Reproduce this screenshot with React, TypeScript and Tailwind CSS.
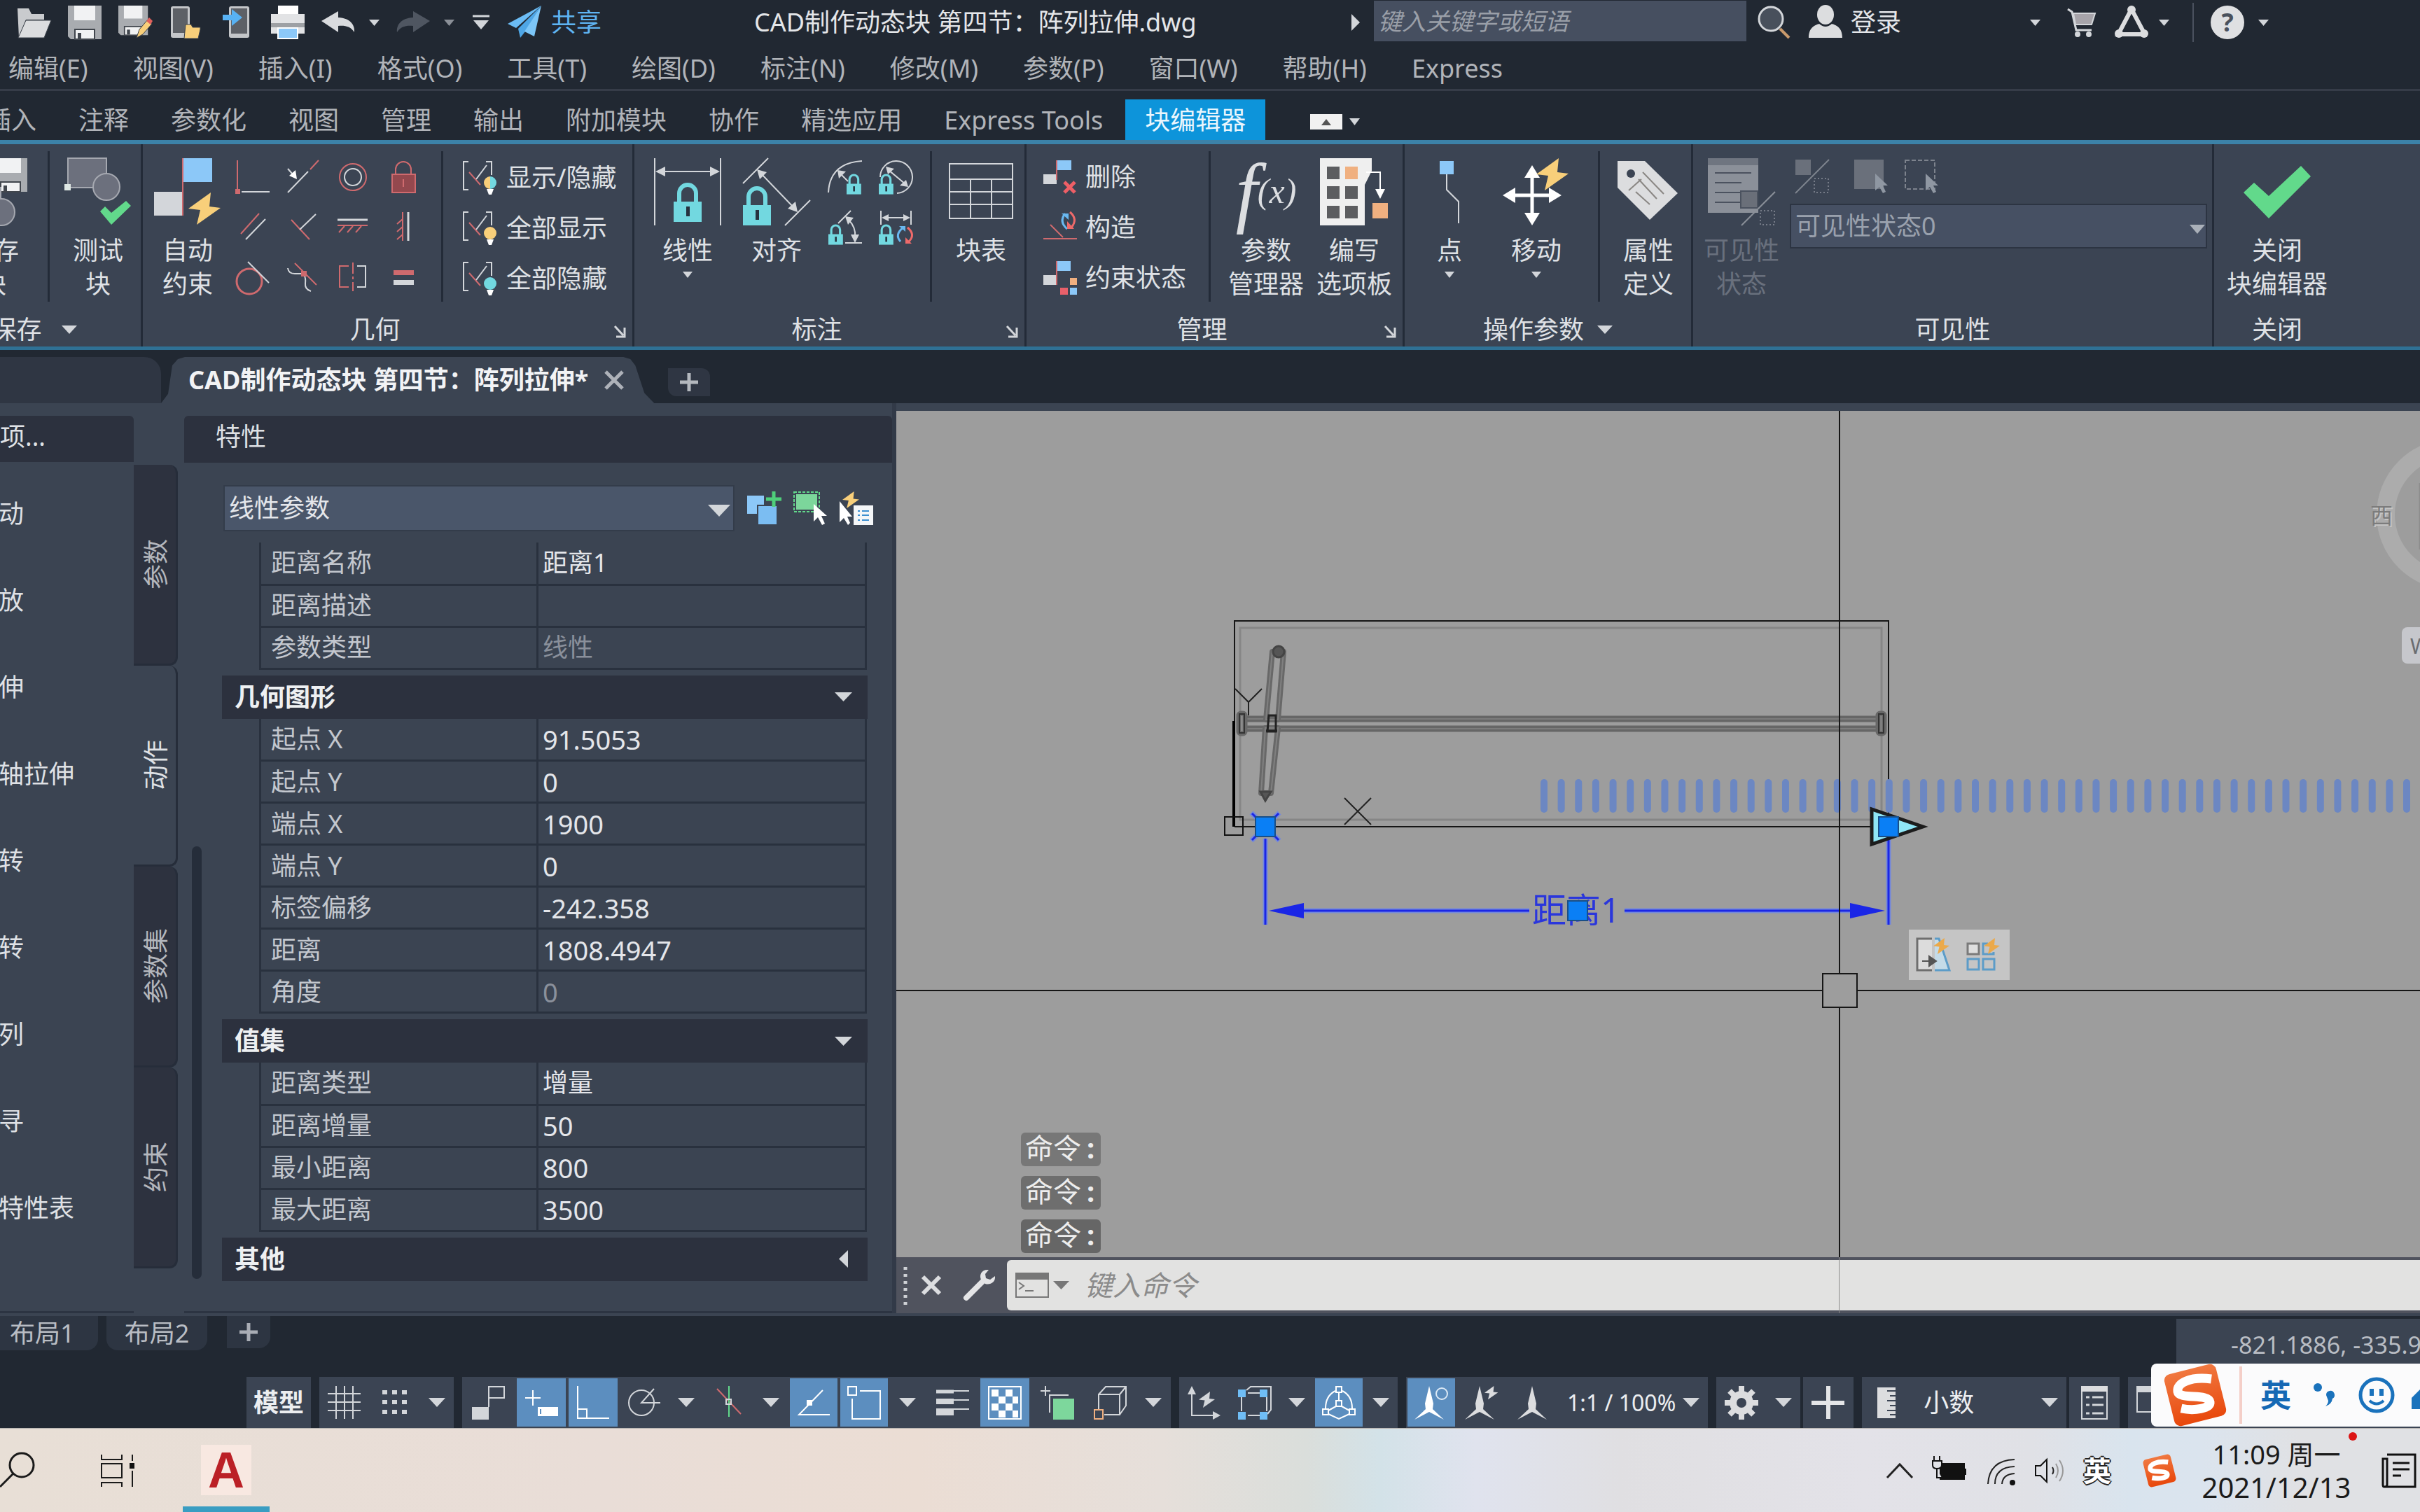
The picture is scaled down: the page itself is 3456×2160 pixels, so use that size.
import type { ReactNode } from 'react'

const GREY = '#d3d6da'
const BLUE = '#8cc8f8'
const RED = '#cf6a6e'
const YELLOW = '#f8cf7a'
const CYAN = '#72d8e0'
const GREEN = '#62d98b'
const ORANGE = '#f0b080'

interface IconProps {
  w?: number
  h?: number
  children: ReactNode
}

function Icon({ w = 48, h = 48, children }: IconProps) {
  return (
    <svg width={w} height={h} viewBox={`0 0 ${w} ${h}`} fill="none" stroke={GREY} strokeWidth={2} className="block shrink-0 overflow-visible" aria-hidden="true">
      {children}
    </svg>
  )
}

function Caret({ w = 24, h = 13, color = GREY }: { w?: number; h?: number; color?: string }) {
  return (
    <svg width={w} height={h} viewBox="0 0 24 13" preserveAspectRatio="none" className="block shrink-0" aria-hidden="true">
      <path d="M0 0H24L12 13Z" fill={color} />
    </svg>
  )
}

function Lock({ x, y, s = 1, keyhole = '#26323f' }: { x: number; y: number; s?: number; keyhole?: string }) {
  return (
    <g transform={`translate(${x} ${y}) scale(${s})`}>
      <path d="M8 28V14a12 12 0 0 1 24 0V28" stroke={CYAN} strokeWidth={6} />
      <rect y={26} width={40} height={29} fill={CYAN} stroke="none" />
      <rect x={18} y={33} width={5} height={14} fill={keyhole} stroke="none" />
    </g>
  )
}

function Bolt({ x, y, s = 1, color = YELLOW }: { x: number; y: number; s?: number; color?: string }) {
  return <path transform={`translate(${x} ${y}) scale(${s})`} d="M32 0L0 23L17 25L12 46L46 22L30 20Z" fill={color} stroke="none" />
}

function Floppy() {
  return (
    <g stroke="none">
      <path d="M0 0H48V48H4L0 44Z" fill="#a9acb0" />
      <rect x={9} y={0} width={30} height={21} fill="#f1f2f3" />
      <rect x={10} y={34} width={28} height={14} fill="#f1f2f3" stroke="#41464d" strokeWidth={2} />
      <rect x={14} y={39} width={5} height={8} fill="#41464d" />
    </g>
  )
}

/* ---------- Title bar ---------- */

function TitleBar() {
  return (
    <header className="flex h-16 shrink-0 items-center pr-[216px] text-[36px] text-[#e4e6e9]">
      <div className="flex items-center pl-[2px]">
        <button aria-label="打开" className="ml-[23px]">
          <Icon>
            <path d="M0 4H16L20 12H38V20H12L2 46Z" fill="#c9cbce" stroke="none" />
            <path d="M12 21H48L38 46H1Z" fill="#dcdddf" stroke="#3a4049" strokeWidth={1} />
          </Icon>
        </button>
        <button aria-label="保存" className="ml-6">
          <Icon><Floppy /></Icon>
        </button>
        <button aria-label="另存为" className="ml-6">
          <Icon>
            <g transform="scale(.88 .88)"><Floppy /></g>
            <path d="M26 46L30 34L42 20L48 26L35 41Z" fill={YELLOW} stroke="#3a4049" strokeWidth={1} />
            <path d="M40 22L44 17L49 22L46 27Z" fill="#e0605c" stroke="none" />
          </Icon>
        </button>
        <button aria-label="从移动设备打开" className="ml-[26px]">
          <Icon>
            <rect x={1} y={1} width={27} height={45} rx={3} fill="#c4c6c9" stroke="none" />
            <rect x={4} y={4} width={21} height={35} fill="#5d6066" stroke="none" />
            <path d="M22 27H30L32 31H43V34L40 47H20Z" fill={YELLOW} stroke="#3a4049" strokeWidth={1} />
          </Icon>
        </button>
        <button aria-label="保存到移动设备" className="ml-[26px]">
          <Icon>
            <rect x={10} y={1} width={29} height={45} rx={3} fill="#c4c6c9" stroke="none" />
            <rect x={13} y={4} width={23} height={36} fill="#5d6066" stroke="none" />
            <path d="M1 13H14V5L29 17L14 29V21H1Z" fill="#58b2f4" stroke="none" />
          </Icon>
        </button>
        <button aria-label="打印" className="ml-[22px]">
          <Icon>
            <rect x={10} y={0} width={29} height={16} fill="#fff" stroke="none" />
            <path d="M0 12H48V40H0Z" fill="#e2e3e5" stroke="none" />
            <path d="M0 25H48V31H0Z" fill="#9da0a4" stroke="none" />
            <rect x={10} y={32} width={28} height={15} fill={BLUE} stroke="#fff" />
          </Icon>
        </button>
        <button aria-label="放弃" className="ml-6">
          <Icon><path d="M0 22L24 8V17C42 18 48 28 47 38C42 30 34 28 24 29V38Z" fill="#d9dbde" stroke="none" /></Icon>
        </button>
        <button aria-label="放弃列表" className="ml-5"><Caret w={15} h={9} /></button>
        <button aria-label="重做" className="ml-6">
          <Icon><path d="M48 22L24 8V17C6 18 0 28 1 38C6 30 14 28 24 29V38Z" fill="#4f5661" stroke="none" /></Icon>
        </button>
        <button aria-label="重做列表" className="ml-5"><Caret w={15} h={9} color="#8b9098" /></button>
        <button aria-label="自定义" className="ml-[26px]">
          <Icon w={24} h={24}>
            <path d="M0 3H24" strokeWidth={3} />
            <path d="M1 9H23L12 22Z" fill={GREY} stroke="none" />
          </Icon>
        </button>
        <button className="ml-[26px] flex items-center gap-[14px] text-[#5fb4f2]">
          <Icon>
            <path d="M48 0L0 26L12 32Z" fill="#6bbcf5" stroke="none" />
            <path d="M48 0L15 33L18 46L25 37Z" fill="#4ea6e6" stroke="none" />
            <path d="M48 0L24 37L38 44Z" fill="#7cc6f8" stroke="none" />
          </Icon>
          共享
        </button>
      </div>
      <h1 className="ml-[218px] whitespace-nowrap">CAD制作动态块 第四节：阵列拉伸.dwg</h1>
      <div className="flex-1" />
      <svg width={12} height={24} className="mr-5" aria-hidden="true"><path d="M0 0L12 12L0 24Z" fill={GREY} /></svg>
      <input aria-label="搜索" placeholder="键入关键字或短语" className="mb-1 h-[58px] w-[532px] bg-[#464f60] px-[6px] text-[34px] text-white italic placeholder:text-[#9a9fa8]" />
      <button aria-label="查找" className="ml-[17px]">
        <Icon>
          <circle cx={18} cy={19} r={17} fill="#48505c" strokeWidth={3} />
          <path d="M31 33L44 46" stroke="#c99a6c" strokeWidth={4} />
        </Icon>
      </button>
      <button className="ml-6 flex items-center gap-3">
        <Icon>
          <ellipse cx={24} cy={13} rx={12} ry={14} fill="#dcdddf" stroke="none" />
          <path d="M0 46C0 32 8 28 15 26Q24 34 33 26C40 28 48 32 48 46Z" fill="#dcdddf" stroke="none" />
        </Icon>
        登录
      </button>
      <button aria-label="账户列表" className="ml-[184px]"><Caret w={15} h={9} /></button>
      <button aria-label="应用商店" className="ml-[39px]">
        <Icon w={40} h={42}>
          <path d="M0 2L6 6L12 32H34" strokeWidth={3} />
          <path d="M8 8H39L34 24H11Z" fill="#a7a4aa" />
          <circle cx={14} cy={38} r={3} fill={GREY} />
          <circle cx={30} cy={38} r={3} fill={GREY} />
        </Icon>
      </button>
      <button aria-label="保持连接" className="ml-[27px]">
        <Icon>
          <path d="M24 5L43 41M24 5L5 41H43" stroke="#dcdddf" strokeWidth={6} />
          <g fill="#dcdddf" stroke="none"><circle cx={24} cy={6} r={6} /><circle cx={6} cy={40} r={6} /><circle cx={42} cy={40} r={6} /></g>
        </Icon>
      </button>
      <button aria-label="连接列表" className="ml-[15px]"><Caret w={15} h={9} /></button>
      <div className="ml-[33px] h-14 w-[2px] bg-[#4a515f]" />
      <button aria-label="帮助" className="ml-6 flex size-12 items-center justify-center rounded-full bg-[#dfe0e2] text-[36px] leading-none font-bold text-[#4a515c]">?</button>
      <button aria-label="帮助列表" className="ml-5"><Caret w={15} h={9} /></button>
    </header>
  )
}

const menus = ['编辑(E)', '视图(V)', '插入(I)', '格式(O)', '工具(T)', '绘图(D)', '标注(N)', '修改(M)', '参数(P)', '窗口(W)', '帮助(H)', 'Express']

const ribbonTabs = ['插入', '注释', '参数化', '视图', '管理', '输出', '附加模块', '协作', '精选应用', 'Express Tools', '块编辑器']

function MenuBar() {
  return (
    <nav className="flex h-[66px] shrink-0 items-center gap-16 border-b-[3px] border-[#363c48] pt-1 pl-3 text-[36px] text-[#b1b4b9]">
      {menus.map((m) => (
        <button key={m} className="whitespace-nowrap">{m}</button>
      ))}
    </nav>
  )
}

function RibbonTabs() {
  return (
    <div role="tablist" className="-ml-12 flex h-[70px] shrink-0 items-end gap-1 text-[36px] text-[#b1b4b9]">
      {ribbonTabs.map((t) => (
        <button
          key={t}
          role="tab"
          aria-selected={t === '块编辑器'}
          className={`h-[58px] px-7 leading-[60px] whitespace-nowrap ${t === '块编辑器' ? 'bg-[#0d94da] text-[#eaf6fd]' : ''}`}
        >
          {t}
        </button>
      ))}
      <button aria-label="最小化功能区" className="ml-[60px] flex h-[48px] items-center gap-[10px] self-end pb-1">
        <span className="flex h-[22px] w-[46px] items-center justify-center bg-[#f1f1f1]">
          <span className="rotate-180"><Caret w={14} h={9} color="#555" /></span>
        </span>
        <Caret w={15} h={10} />
      </button>
    </div>
  )
}

/* ---------- Ribbon ---------- */

interface PanelProps {
  title: string
  className?: string
  menu?: boolean
  launcher?: boolean
  children: ReactNode
}

function Panel({ title, className = '', menu, launcher, children }: PanelProps) {
  return (
    <section className={`flex shrink-0 flex-col border-r-[3px] border-[#232b38] ${className}`}>
      <div className="flex h-[225px]">{children}</div>
      <div className={`relative flex h-16 items-center justify-center gap-[19px] pt-4 ${launcher ? 'pr-9' : ''}`}>
        <span>{title}</span>
        {menu && <Caret w={22} h={12} />}
        {launcher && (
          <button aria-label={`${title}设置`} className="absolute right-[9px] bottom-3">
            <Icon w={18} h={18}>
              <path d="M2 1L14 14M16 3V16H4" strokeWidth={3} />
            </Icon>
          </button>
        )}
      </div>
    </section>
  )
}

interface BigButtonProps {
  icon: ReactNode
  lines: string[]
  className: string
  menu?: boolean
}

function BigButton({ icon, lines, className, menu }: BigButtonProps) {
  return (
    <button className={`flex shrink-0 flex-col items-center pt-[18px] ${className}`}>
      <span className="flex h-[98px] items-center justify-center">{icon}</span>
      <span className="mt-3 flex flex-col items-center leading-[48px]">
        {lines.map((l) => (
          <span key={l} className="block whitespace-nowrap">{l}</span>
        ))}
        {menu && <span className="mt-[6px]"><Caret w={14} h={9} /></span>}
      </span>
    </button>
  )
}

function Divider() {
  return <div className="mt-[10px] h-[215px] w-[3px] shrink-0 bg-[#232b38]" />
}

const geometryIcons: { name: string; art: ReactNode }[] = [
  { name: '重合', art: <><path d="M3 0V42" stroke={RED} /><rect x={0} y={41} width={7} height={7} fill={RED} stroke="none" /><path d="M9 45H49" /></> },
  { name: '共线', art: <><path d="M3 46L32 16" /><path d="M35 13L47 0" stroke={RED} /><path d="M3 12L10 20" /><path d="M16 27L5 22L14 14Z" fill="#fff" stroke="none" /></> },
  { name: '同心', art: <><circle cx={24} cy={24} r={19} stroke={RED} /><circle cx={24} cy={24} r={12} /></> },
  { name: '固定', art: <><path d="M13 20V13a11 11 0 0 1 22 0v7" stroke={RED} /><rect x={8} y={20} width={33} height={26} fill="#94484e" stroke={RED} /><path d="M24 27V38" stroke={RED} /></> },
  { name: '平行', art: <><path d="M8 33L34 4" stroke={RED} /><path d="M15 41L43 12" /></> },
  { name: '垂直', art: <><path d="M8 13L34 41" stroke={RED} /><path d="M20 27L43 5" /></> },
  { name: '水平', art: <><path d="M2 13H45" strokeWidth={3} /><path d="M2 21H45M12 22L4 31M24 22L16 31M36 22L28 31" stroke={RED} /></> },
  { name: '竖直', art: <><path d="M31 2V43" strokeWidth={3} /><path d="M23 2V43M23 12L15 19M23 23L15 30M23 34L15 41" stroke={RED} /></> },
  { name: '相切', art: <><circle cx={20} cy={29} r={18} stroke={RED} strokeWidth={3} /><path d="M18 1L48 31" /></> },
  { name: '平滑', art: <><path d="M3 10Q4 18 13 18H24M26 20Q29 24 28 32T36 43" /><path d="M13 3L44 34" stroke={RED} /><rect x={22} y={14} width={8} height={8} fill={RED} stroke="none" /></> },
  { name: '对称', art: <><path d="M18 7H5V37H18" stroke={RED} /><path d="M24 2V18M24 22V26M24 30V43" stroke={RED} /><path d="M30 7H42V37H30" /></> },
  { name: '相等', art: <><rect x={10} y={13} width={29} height={7} fill={RED} stroke="none" /><rect x={10} y={27} width={29} height={7} fill={GREY} stroke="none" /></> },
]

const visibilityRows = [
  { label: '显示/隐藏', left: YELLOW, right: CYAN },
  { label: '全部显示', left: YELLOW, right: YELLOW },
  { label: '全部隐藏', left: CYAN, right: CYAN },
]

function GeometryPanel() {
  return (
    <Panel title="几何" launcher className="w-[702px]">
      <BigButton
        className="ml-2 w-[112px]"
        lines={['自动', '约束']}
        icon={
          <Icon w={96} h={98}>
            <rect x={42} y={2} width={41} height={34} fill={BLUE} stroke="none" />
            <rect x={0} y={50} width={41} height={34} fill={GREY} stroke="none" />
            <path d="M41 2V84" stroke={RED} />
            <Bolt x={49} y={51} />
          </Icon>
        }
      />
      <div className="mt-[11px] grid h-[216px] w-[288px] shrink-0 grid-cols-4 grid-rows-3 place-items-center">
        {geometryIcons.map((g) => (
          <button key={g.name} aria-label={g.name}><Icon>{g.art}</Icon></button>
        ))}
      </div>
      <div className="w-[18px]" />
      <Divider />
      <div className="mt-3 grid h-[216px] grid-rows-3 items-center pl-[26px]">
        {visibilityRows.map((r) => (
          <button key={r.label} className="flex items-center gap-3 whitespace-nowrap">
            <Icon w={52}>
              <path d="M10 1H3V41H10M35 1H43V20" />
              <path d="M11 16L27 34" stroke={RED} />
              <path d="M21 26L36 6" />
              <path d="M41 22A9 9 0 0 0 41 40Z" fill={r.left} stroke="none" />
              <path d="M41 22A9 9 0 0 1 41 40Z" fill={r.right} stroke="none" />
              <path d="M36 40H46L43 48H39Z" fill="#fff" stroke="none" />
            </Icon>
            {r.label}
          </button>
        ))}
      </div>
    </Panel>
  )
}

function DimensionPanel() {
  return (
    <Panel title="标注" launcher className="w-[560px]">
      <BigButton
        className="ml-[15px] w-[122px]"
        lines={['线性']}
        menu
        icon={
          <Icon w={96} h={98}>
            <path d="M1 2V98M95 2V98M4 21H92" />
            <path d="M2 21L16 14V28ZM94 21L80 14V28Z" fill={GREY} stroke="none" />
            <Lock x={28} y={38} />
          </Icon>
        }
      />
      <BigButton
        className="w-[128px] pl-1"
        lines={['对齐']}
        icon={
          <Icon w={96} h={98}>
            <path d="M36 2L0 38M96 62L60 98M24 22L74 74" />
            <path d="M20 18L34 22L24 32ZM78 79L64 74L75 64Z" fill={GREY} stroke="none" />
            <Lock x={0} y={43} />
          </Icon>
        }
      />
      <div className="mt-[11px] grid h-36 w-36 shrink-0 grid-cols-2 grid-rows-2 place-items-center">
        <button aria-label="半径">
          <Icon>
            <path d="M0 46Q2 4 48 1M16 18L28 30" />
            <path d="M13 14L25 16L15 26Z" fill={GREY} stroke="none" />
            <Lock x={26} y={20} s={0.52} />
          </Icon>
        </button>
        <button aria-label="直径">
          <Icon>
            <path d="M2 24A23 23 0 1 1 26 47M14 14L38 34" />
            <path d="M10 9L22 12L13 20ZM42 38L30 36L39 28Z" fill={GREY} stroke="none" />
            <Lock x={0} y={20} s={0.52} />
          </Icon>
        </button>
        <button aria-label="角度">
          <Icon>
            <path d="M14 18L32 0M24 46H48M28 12Q40 24 38 38" />
            <path d="M24 8L36 10L28 20ZM38 46L32 34H44Z" fill={GREY} stroke="none" />
            <Lock x={0} y={20} s={0.52} />
          </Icon>
        </button>
        <button aria-label="转换">
          <Icon>
            <path d="M3 0V20M46 0V20M6 10H43" />
            <path d="M4 10L14 5V15ZM45 10L35 5V15Z" fill={GREY} stroke="none" />
            <Lock x={0} y={20} s={0.52} />
            <path d="M35 24Q22 34 31 44" stroke="#69b8f0" strokeWidth={3} />
            <path d="M29 22H38V30Z" fill="#69b8f0" stroke="none" />
            <path d="M41 24Q53 34 43 44" stroke="#ee6a6a" strokeWidth={3} />
            <path d="M38 38V47H47Z" fill="#ee6a6a" stroke="none" />
          </Icon>
        </button>
      </div>
      <div className="w-4" />
      <Divider />
      <BigButton
        className="w-[132px] pl-2"
        lines={['块表']}
        icon={
          <Icon w={92} h={80}>
            <path d="M1 1H91V79H1ZM1 23H91M1 41H91M1 59H91M31 23V79M61 23V79" />
          </Icon>
        }
      />
    </Panel>
  )
}

function ManagePanel() {
  return (
    <Panel title="管理" launcher className="w-[540px]">
      <div className="mt-[11px] grid h-[216px] w-[260px] shrink-0 grid-rows-3 items-center pl-6">
        <button className="flex items-center gap-3 whitespace-nowrap">
          <Icon>
            <rect x={20} y={0} width={20} height={14} fill={BLUE} stroke="none" />
            <rect x={0} y={20} width={19} height={14} fill={GREY} stroke="none" />
            <path d="M19 0V28" stroke={RED} />
            <path d="M30 31L45 46M45 31L30 46" stroke="#ee5f66" strokeWidth={5} />
          </Icon>
          删除
        </button>
        <button className="flex items-center gap-3 whitespace-nowrap">
          <Icon>
            <path d="M0 40H48M10 20L28 38" stroke={RED} />
            <path d="M34 26Q22 16 31 4" stroke="#69b8f0" strokeWidth={3} />
            <path d="M26 4H36V13Z" fill="#69b8f0" stroke="none" />
            <path d="M38 2Q50 12 40 24" stroke="#ee6a6a" strokeWidth={3} />
            <path d="M34 15V26H44Z" fill="#ee6a6a" stroke="none" />
          </Icon>
          构造
        </button>
        <button className="flex items-center gap-3 whitespace-nowrap">
          <Icon>
            <rect x={20} y={0} width={19} height={14} fill={BLUE} stroke="none" />
            <rect x={0} y={20} width={19} height={14} fill={GREY} stroke="none" />
            <path d="M19 0V34" stroke={RED} />
            <rect x={38} y={24} width={10} height={10} fill={ORANGE} stroke="none" />
            <rect x={24} y={38} width={11} height={10} fill="#e8606a" stroke="none" />
            <rect x={38} y={38} width={10} height={10} fill={BLUE} stroke="none" />
          </Icon>
          约束状态
        </button>
      </div>
      <Divider />
      <BigButton
        className="ml-[16px] w-[126px]"
        lines={['参数', '管理器']}
        icon={
          <span className="flex items-center font-['Liberation_Serif',serif] text-[#dcdee1] italic">
            <span className="text-[112px] leading-[98px]">f</span>
            <span className="text-[50px] leading-[98px]">(x)</span>
          </span>
        }
      />
      <BigButton
        className="w-[126px]"
        lines={['编写', '选项板']}
        icon={
          <Icon w={98} h={98}>
            <path d="M0 2H74V20L64 40V98H0Z" fill="#efefef" stroke="none" />
            <g fill="#5c5d60" stroke="none">
              <rect x={10} y={14} width={18} height={18} />
              <rect x={10} y={42} width={18} height={18} />
              <rect x={10} y={70} width={18} height={18} />
              <rect x={36} y={42} width={18} height={18} />
              <rect x={36} y={70} width={18} height={18} />
            </g>
            <rect x={36} y={14} width={18} height={18} fill={ORANGE} stroke="none" />
            <path d="M66 22H86V50" stroke="#fff" />
            <path d="M86 60L79 46H93Z" fill="#fff" stroke="none" />
            <rect x={75} y={66} width={22} height={22} fill={ORANGE} stroke="none" />
          </Icon>
        }
      />
    </Panel>
  )
}

function ActionPanel() {
  return (
    <Panel title="操作参数" menu className="w-[412px]">
      <BigButton
        className="w-[128px]"
        lines={['点']}
        menu
        icon={
          <Icon w={32} h={98}>
            <rect x={2} y={6} width={20} height={19} fill={BLUE} stroke="none" />
            <path d="M12 25V47L29 64V95" />
          </Icon>
        }
      />
      <BigButton
        className="w-[120px]"
        lines={['移动']}
        menu
        icon={
          <Icon w={96} h={98}>
            <path d="M42 24V86M12 55H74" stroke="#fff" strokeWidth={5} />
            <path d="M42 12L31 30H53ZM42 98L31 80H53ZM0 55L18 44V66ZM84 55L66 44V66Z" fill="#fff" stroke="none" />
            <Bolt x={48} y={2} />
          </Icon>
        }
      />
      <div className="w-7" />
      <Divider />
      <BigButton
        className="w-[130px] pl-2"
        lines={['属性', '定义']}
        icon={
          <Icon w={88} h={98}>
            <path d="M0 6H39L86 52L46 90L0 44Z" fill="#dcdddf" stroke="none" />
            <circle cx={19} cy={24} r={6} fill="#3b4453" stroke="none" />
            <path d="M36 22L66 53M30 32L56 60M26 50L46 68M16 48L34 32" stroke="#8a8784" />
          </Icon>
        }
      />
    </Panel>
  )
}

function VisibilityPanel() {
  return (
    <Panel title="可见性" className="w-[744px]">
      <div className="text-[#69707d]">
        <BigButton
          className="w-[138px]"
          lines={['可见性', '状态']}
          icon={
            <Icon w={96} h={98}>
              <rect x={0} y={2} width={72} height={78} fill="#8b9099" stroke="none" />
              <rect x={0} y={2} width={72} height={10} fill="#6f7580" stroke="none" />
              <path d="M10 23H62M10 37H48M10 51H52M10 65H46" stroke="#4b525f" />
              <rect x={47} y={49} width={24} height={24} fill="#6a6f79" stroke="#4b525f" />
              <path d="M96 50L48 98" stroke="#8b9099" />
              <rect x={75} y={77} width={20} height={20} stroke="#767c88" strokeDasharray="2 3" />
            </Icon>
          }
        />
      </div>
      <div className="flex flex-1 flex-col pr-[7px]">
        <div className="flex h-[85px] items-center gap-9 pt-[6px] pl-2">
          <button aria-label="可见性模式">
            <Icon>
              <rect x={0} y={0} width={22} height={22} fill="#6a707b" stroke="none" />
              <path d="M48 0L0 48" stroke="#7d838d" />
              <rect x={27} y={27} width={20} height={20} stroke="#767c88" strokeDasharray="2 3" />
            </Icon>
          </button>
          <button aria-label="使可见">
            <Icon>
              <rect x={0} y={0} width={42} height={42} fill="#6a707b" stroke="none" />
              <path d="M30 20V44L36 39L41 48L45 46L41 37H48Z" fill="#8f97a2" stroke="none" />
            </Icon>
          </button>
          <button aria-label="使不可见" className="-ml-3">
            <Icon>
              <rect x={1} y={1} width={42} height={41} stroke="#7d838d" strokeDasharray="6 3" />
              <path d="M30 20V44L36 39L41 48L45 46L41 37H48Z" fill="#8f97a2" stroke="none" />
            </Icon>
          </button>
        </div>
        <div className="relative">
          <select aria-label="可见性状态" className="h-[64px] w-full appearance-none border-2 border-[#2c3442] bg-[#465063] px-[6px] text-[#9aa1ad]">
            <option>可见性状态0</option>
          </select>
          <span className="pointer-events-none absolute top-[30px] right-[3px]"><Caret w={22} h={13} color="#aab0b9" /></span>
        </div>
      </div>
    </Panel>
  )
}

function Ribbon() {
  return (
    <div className="flex shrink-0 overflow-hidden border-t-[6px] border-b-[5px] border-t-[#3c82a8] border-b-[#2f7195] bg-[#3b4453] text-[36px] text-[#dfe1e5]">
      <section className="-ml-[76px] flex w-[280px] shrink-0 flex-col border-r-[3px] border-[#232b38]">
        <div className="flex h-[225px]">
          <BigButton
            className="mr-[10px] w-[134px]"
            lines={['保存', '块']}
            icon={
              <Icon w={96} h={98}>
                <g transform="translate(48 2)"><Floppy /></g>
                <rect x={8} y={44} width={50} height={38} fill="#6c707d" stroke="#a5a8b0" />
                <circle cx={59} cy={79} r={19} fill="#6c707d" stroke="#a5a8b0" />
              </Icon>
            }
          />
          <Divider />
          <BigButton
            className="w-[134px] pl-1"
            lines={['测试', '块']}
            icon={
              <Icon w={96} h={98}>
                <rect x={5} y={2} width={55} height={42} fill="#6c707d" stroke="#a5a8b0" />
                <circle cx={60} cy={43} r={19} fill="#6c707d" stroke="#a5a8b0" />
                <rect x={0} y={39} width={9} height={9} fill="#dfe8e4" stroke="none" />
                <path d="M51 78L58 71L67 80L88 63L95 70L67 97Z" fill={GREEN} stroke="none" />
              </Icon>
            }
          />
        </div>
        <div className="flex h-16 items-center justify-center gap-7 pt-4 pr-[28px]">
          保存
          <Caret w={22} h={12} />
        </div>
      </section>
      <GeometryPanel />
      <DimensionPanel />
      <ManagePanel />
      <ActionPanel />
      <VisibilityPanel />
      <section className="flex w-[180px] shrink-0 flex-col">
        <BigButton
          className="h-[225px] w-[180px]"
          lines={['关闭', '块编辑器']}
          icon={
            <Icon w={96} h={98}>
              <path d="M0 51L15 37L36 56L82 13L96 28L36 88Z" fill={GREEN} stroke="none" />
            </Icon>
          }
        />
        <div className="flex h-16 items-center justify-center pt-4">关闭</div>
      </section>
    </div>
  )
}

/* ---------- Document tabs ---------- */

function DocumentTabs() {
  return (
    <div className="flex h-[76px] shrink-0 items-end text-[36px]">
      <div className="h-[66px] w-[230px] rounded-tr-3xl bg-[#2f3643]" />
      <div className="flex h-[66px] items-center gap-[22px] bg-[#3b4452] pr-[42px] pl-[39px] font-bold text-[#f2f3f5] [clip-path:polygon(0_100%,10px_80%,16px_12px,24px_3px,34px_0,calc(100%-44px)_0,calc(100%-34px)_3px,calc(100%-27px)_12px,calc(100%-14px)_78%,100%_100%)]">
        <span className="whitespace-nowrap">CAD制作动态块 第四节：阵列拉伸*</span>
        <button aria-label="关闭图形">
          <Icon w={30} h={30}><path d="M3 3L27 27M27 3L3 27" stroke="#aeb2b9" strokeWidth={5} /></Icon>
        </button>
      </div>
      <button aria-label="新建图形" className="mb-[10px] ml-5 flex h-10 w-[60px] items-center justify-center rounded-tr-xl rounded-bl-xl bg-[#2f3643]">
        <Icon w={26} h={26}><path d="M13 0V26M0 13H26" stroke="#b4b8be" strokeWidth={5} /></Icon>
      </button>
    </div>
  )
}

/* ---------- Palettes ---------- */

const authoringItems = ['动', '放', '伸', '轴拉伸', '转', '转', '列', '寻', '特性表']

const sideTabs = [
  { name: '参数', active: false },
  { name: '动作', active: true },
  { name: '参数集', active: false },
  { name: '约束', active: false },
]

function AuthoringPalette() {
  return (
    <aside className="flex shrink-0 pt-[18px] text-[36px] text-[#dfe1e5]">
      <div className="w-[191px] overflow-hidden border-b-[3px] border-[#2c3442]">
        <h2 className="h-[66px] rounded-tr-md bg-[#2c313e] leading-[60px]">项...</h2>
        <ul className="pt-3">
          {authoringItems.map((item, i) => (
            <li key={i} className="-ml-[2px] flex h-[124px] items-center">
              <button className="whitespace-nowrap">{item}</button>
            </li>
          ))}
        </ul>
      </div>
      <div role="tablist" className="flex w-[63px] flex-col pt-[70px]">
        {sideTabs.map((t) => (
          <button
            key={t.name}
            role="tab"
            aria-selected={t.active}
            className={`flex h-[287px] items-center justify-center rounded-r-xl border-r-[3px] border-b-[3px] border-[#262d3a] pl-1 ${t.active ? 'text-[#dfe1e5]' : 'bg-[#2d323f] text-[#b4b7bd]'}`}
          >
            <span className="rotate-180 leading-none [text-orientation:sideways] [writing-mode:vertical-rl]">{t.name}</span>
          </button>
        ))}
      </div>
    </aside>
  )
}

interface Row {
  name: string
  value: string
  readOnly?: boolean
}

const miscRows: Row[] = [
  { name: '距离名称', value: '距离1' },
  { name: '距离描述', value: '' },
  { name: '参数类型', value: '线性', readOnly: true },
]

const geometryRows: Row[] = [
  { name: '起点 X', value: '91.5053' },
  { name: '起点 Y', value: '0' },
  { name: '端点 X', value: '1900' },
  { name: '端点 Y', value: '0' },
  { name: '标签偏移', value: '-242.358' },
  { name: '距离', value: '1808.4947' },
  { name: '角度', value: '0', readOnly: true },
]

const valueSetRows: Row[] = [
  { name: '距离类型', value: '增量' },
  { name: '距离增量', value: '50' },
  { name: '最小距离', value: '800' },
  { name: '最大距离', value: '3500' },
]

function PropertyTable({ rows, label }: { rows: Row[]; label: string }) {
  const isNumber = (value: string) => /^[-\d.]+$/.test(value)

  return (
    <table aria-label={label} className="mb-2 ml-[53px] w-[868px] table-fixed border-collapse border-x-[3px] border-b-[3px] border-[#29313e]">
      <tbody>
        {rows.map((r) => (
          <tr key={r.name} className="h-[60px] border-b-[3px] border-[#29313e]">
            <th scope="row" className="w-[396px] border-r-[3px] border-[#29313e] p-0 pl-[14px] text-left leading-[50px] font-normal text-[#c3c7ce]">{r.name}</th>
            <td className={`p-0 pl-[6px] leading-[50px] ${isNumber(r.value) ? 'text-[38px]' : ''} ${r.readOnly ? 'text-[#8a909b]' : 'text-[#e4e6ea]'}`}>{r.value}</td>
          </tr>
        ))}
      </tbody>
    </table>
  )
}

function Category({ title, open = true }: { title: string; open?: boolean }) {
  return (
    <button aria-expanded={open} className="flex h-[62px] w-[922px] items-center justify-between bg-[#2c313e] pr-[22px] pl-[18px] font-bold text-[#eef0f2]">
      {title}
      {open ? <Caret w={25} h={13} /> : <span className="rotate-90"><Caret w={25} h={13} /></span>}
    </button>
  )
}

function PropertiesPalette() {
  return (
    <section className="ml-[9px] flex shrink-0 flex-col border-r-[6px] border-[#323a48] pt-[18px] text-[36px] text-[#dfe1e5]">
      <div className="flex flex-1 flex-col border-b-[3px] border-[#2c3442]">
        <h2 className="h-[67px] w-[1011px] rounded-t-md bg-[#2c313e] pl-[45px] leading-[60px]">特性</h2>
        <div className="flex items-center pt-8 pl-14">
          <div className="relative">
            <select aria-label="对象类型" className="h-[66px] w-[730px] appearance-none border-2 border-[#333c4a] bg-[#4a566a] px-[6px] text-[#e4e6ea]">
              <option>线性参数</option>
            </select>
            <span className="pointer-events-none absolute top-[28px] right-[6px]"><Caret w={32} h={17} /></span>
          </div>
          <button aria-label="切换 PICKADD" className="ml-[18px]">
            <Icon>
              <rect x={0} y={6} width={24} height={26} fill={BLUE} stroke="none" />
              <rect x={15} y={20} width={28} height={28} fill="#7bbdf2" stroke="#3b4452" />
              <path d="M38 0V22M27 11H49" stroke="#4fcf7a" strokeWidth={5} />
            </Icon>
          </button>
          <button aria-label="选择对象" className="ml-[18px]">
            <Icon>
              <rect x={1} y={1} width={36} height={28} stroke={GREEN} strokeDasharray="4 2" />
              <rect x={4} y={4} width={30} height={22} fill="#7cd69b" stroke="none" />
              <path d="M29 18V43L35 37L41 48L45 46L40 35H48Z" fill="#fff" stroke="none" />
            </Icon>
          </button>
          <button aria-label="快速选择" className="ml-[18px]">
            <Icon>
              <Bolt x={4} y={0} s={0.52} />
              <path d="M0 14V44L6 38L12 48L15 45L11 36H18Z" fill="#fff" stroke="none" />
              <rect x={20} y={20} width={28} height={28} fill="#f4f6f8" stroke="none" />
              <path d="M26 28H29M32 28H42M26 34H29M32 34H42M26 41H29M32 41H42" stroke="#3c8fd0" />
            </Icon>
          </button>
        </div>
        <div className="flex pt-4">
          <div className="mt-[434px] mr-[29px] ml-[11px] h-[618px] w-[14px] rounded-full bg-[#252d3a]" />
          <div>
            <PropertyTable rows={miscRows} label="其他特性" />
            <Category title="几何图形" />
            <PropertyTable rows={geometryRows} label="几何图形" />
            <Category title="值集" />
            <PropertyTable rows={valueSetRows} label="值集" />
            <Category title="其他" open={false} />
          </div>
        </div>
      </div>
    </section>
  )
}

/* ---------- Drawing area ---------- */

const repeatBars = Array.from({ length: 52 }, (_, i) => 2205 + i * 24.64)

function Drawing() {
  return (
    <svg className="absolute inset-0 h-full w-full" fill="none" aria-label="模型空间">
      <g transform="translate(-1280 -587)">
        <circle cx={3502} cy={735} r={95} stroke="#acacac" strokeWidth={26} />
        <path d="M3456 690V785" stroke="#8c8c8c" strokeWidth={3} />
        <text x={3387} y={750} fontSize={32} fill="#c4c4c4">西</text>
        <text x={3385} y={748} fontSize={32} fill="#7c7c7c">西</text>
        <rect x={1771} y={897} width={916} height={274} stroke="#868686" strokeWidth={3} />
        <path d="M1763 1181V887H2697V1181H1763" stroke="#161616" strokeWidth={2} />
        <path d="M1762 1030V1181" stroke="#000" strokeWidth={4} />
        {/* rail */}
        <path d="M1776 1027H2684M1776 1041H2684" stroke="#666" strokeWidth={9} />
        <path d="M1776 1027H2684M1776 1041H2684" stroke="#7c7c7c" strokeWidth={2} />
        <rect x={1769} y={1019} width={9} height={29} rx={3} stroke="#686868" strokeWidth={7} />
        <rect x={1770} y={1020} width={7} height={27} stroke="#333" strokeWidth={2} />
        <rect x={2682} y={1019} width={9} height={29} rx={3} stroke="#686868" strokeWidth={7} />
        <rect x={2683} y={1020} width={7} height={27} stroke="#333" strokeWidth={2} />
        {/* hanger */}
        <path d="M1817 931L1808 1028H1825L1833 931Z" stroke="#686868" strokeWidth={8} strokeLinejoin="round" />
        <path d="M1817 931L1808 1028H1825L1833 931Z" stroke="#808080" strokeWidth={2} />
        <path d="M1807 1040L1801 1133H1815L1825 1040Z" stroke="#686868" strokeWidth={8} strokeLinejoin="round" />
        <path d="M1807 1040L1801 1133H1815L1825 1040Z" stroke="#808080" strokeWidth={2} />
        <circle cx={1826} cy={931} r={8} fill="#555" stroke="#444" strokeWidth={3} />
        <path d="M1800 1131H1815L1807 1144Z" fill="#555" stroke="#444" strokeWidth={3} />
        <path d="M1812 1022H1822V1045H1810ZM1808 1044H1824" stroke="#222" strokeWidth={3} />
        {/* ucs */}
        <path d="M1764 984L1783 1003L1802 984M1783 1003V1022M1920 1140L1958 1178M1958 1140L1920 1178" stroke="#222" strokeWidth={2} />
        <rect x={1749} y={1167} width={26} height={26} stroke="#111" strokeWidth={2} />
        {repeatBars.map((x) => (
          <path key={x} d={`M${x} 1118V1156`} stroke="#6c87c2" strokeWidth={10} strokeLinecap="round" />
        ))}
        {/* linear parameter */}
        <path d="M1807 1198V1321M2697 1198V1321M1862 1301H2184M2320 1301H2642M1787 1161L1827 1201M1827 1161L1787 1201" stroke="#7488dc" strokeWidth={7} />
        <path d="M1807 1198V1321M2697 1198V1321M1862 1301H2184M2320 1301H2642M1788 1162L1826 1200M1826 1162L1788 1200" stroke="#1a26e6" strokeWidth={3} />
        <path d="M1812 1301L1862 1290V1312ZM2692 1301L2642 1290V1312Z" fill="#1a26e6" />
        <text x={2188} y={1318} fontSize={49} fill="#2a36dc">距离1</text>
        <path d="M2673 1156V1206L2746 1181Z" fill="#8fe6f6" stroke="#1c1c1c" strokeWidth={5} />
        <rect x={1793} y={1167} width={28} height={28} fill="#0a7ff5" stroke="#1b4f86" strokeWidth={2} />
        <rect x={2683} y={1167} width={28} height={28} fill="#0a7ff5" stroke="#1b4f86" strokeWidth={2} />
        <rect x={2239} y={1287} width={28} height={28} fill="#0a7ff5" stroke="#1b4f86" strokeWidth={2} />
        {/* crosshair */}
        <path d="M2627 587V1390M2627 1440V1800M1280 1415H2602M2652 1415H3600" stroke="#161616" strokeWidth={2} />
        <rect x={2603} y={1391} width={49} height={48} stroke="#161616" strokeWidth={2} />
      </g>
    </svg>
  )
}

function CommandLine() {
  return (
    <div className="relative flex h-20 shrink-0 items-center bg-[#50535e] pl-[10px]">
      <svg width={6} height={56} aria-hidden="true"><path d="M3 2V56" stroke="#cfd1d5" strokeWidth={5} strokeDasharray="4 6" /></svg>
      <button aria-label="关闭命令行" className="ml-5">
        <Icon w={28} h={28}><path d="M2 2L26 26M26 2L2 26" stroke="#dcdde0" strokeWidth={6} /></Icon>
      </button>
      <button aria-label="自定义命令行" className="mr-4 ml-8">
        <Icon w={46} h={46}>
          <path d="M4 41L27 18" stroke="#e4e4e6" strokeWidth={8} strokeLinecap="round" />
          <path d="M36 1C26 0 22 8 25 15L31 21C38 23 46 19 45 10L38 15L32 13L31 7Z" fill="#e4e4e6" stroke="none" />
        </Icon>
      </button>
      <div className="flex h-[72px] flex-1 items-center rounded-l-md bg-[#e2e2e1] pl-3">
        <button aria-label="最近使用的命令" className="flex items-center gap-[6px]">
          <Icon>
            <rect x={1} y={7} width={46} height={34} stroke="#777" strokeWidth={2} />
            <rect x={1} y={7} width={46} height={9} fill="#777" stroke="none" />
            <path d="M5 20L12 25L5 30M14 32H26" stroke="#777" strokeWidth={2} />
          </Icon>
          <Caret w={23} h={12} color="#777" />
        </button>
        <input aria-label="命令" placeholder="键入命令" className="ml-[22px] flex-1 text-[40px] text-[#333] italic placeholder:text-[#8b8b8b]" />
      </div>
      <div className="pointer-events-none absolute inset-y-0 left-[1346px] w-px bg-[#8a8a8a]" />
    </div>
  )
}

function Viewport() {
  return (
    <main className="relative flex min-w-0 flex-1 flex-col overflow-hidden pt-[11px]">
      <div className="relative flex flex-1 flex-col justify-end overflow-hidden bg-[#9d9d9d]">
        <Drawing />
        <button className="absolute top-[309px] left-[2150px] h-[52px] rounded-lg bg-[#c6c7cc] px-3 text-[30px] text-[#6a6c70]">WCS</button>
        <div className="absolute top-[741px] left-[1446px] flex h-[72px] w-[144px] items-center gap-6 bg-[#c5c5c5] pl-[11px]">
          <button aria-label="拉伸动作">
            <Icon>
              <path d="M22 1H1V46H22" fill="#dcdcdc" stroke="#6e6e6e" strokeWidth={3} />
              <path d="M26 1H32L47 46H26" fill="#c4dbe8" stroke="#5c9cc8" strokeWidth={3} />
              <path d="M8 33H20M18 26L28 33L18 40Z" fill="#555" stroke="#555" />
              <Bolt x={24} y={0} s={0.5} color="#eba94a" />
            </Icon>
          </button>
          <button aria-label="阵列动作">
            <Icon>
              <rect x={1} y={8} width={16} height={15} fill="#dedede" stroke="#7a7a7a" strokeWidth={3} />
              <path d="M30 8H23V23H38V20" stroke="#5c9cc8" strokeWidth={3} />
              <rect x={1} y={30} width={16} height={15} stroke="#5c9cc8" strokeWidth={3} />
              <rect x={23} y={30} width={16} height={15} stroke="#5c9cc8" strokeWidth={3} />
              <Bolt x={24} y={0} s={0.5} color="#eba94a" />
            </Icon>
          </button>
        </div>
        <div className="relative mb-[6px] ml-[178px] flex w-[114px] flex-col gap-[14px] text-[40px] leading-[44px] text-[#ededed]">
          <p className="flex h-12 gap-2 rounded-md bg-[#777777] pl-[6px]">命令<b>:</b></p>
          <p className="flex h-12 gap-2 rounded-md bg-[#6e6e6e] pl-[6px]">命令<b>:</b></p>
          <p className="flex h-12 gap-2 rounded-md bg-[#666666] pl-[6px]">命令<b>:</b></p>
        </div>
      </div>
      <CommandLine />
    </main>
  )
}

/* ---------- Layout tabs ---------- */

function LayoutTabs() {
  return (
    <div className="flex h-[87px] shrink-0 items-start text-[36px] text-[#b9bdc4]">
      <button className="h-[49px] w-[140px] rounded-br-2xl bg-[#2d3542] pl-[14px] text-left leading-[48px]">布局1</button>
      <button className="ml-3 h-[49px] w-[144px] rounded-b-2xl bg-[#2d3542] leading-[48px]">布局2</button>
      <button aria-label="新建布局" className="ml-7 flex h-[46px] w-[62px] items-center justify-center rounded-br-2xl bg-[#2d3542]">
        <Icon w={26} h={26}><path d="M13 0V26M0 13H26" stroke="#a9adb5" strokeWidth={5} /></Icon>
      </button>
      <div className="mt-1 ml-auto h-[80px] w-[348px] bg-[#3b4452] pl-[78px] text-[34px] leading-[74px] whitespace-nowrap">-821.1886, -335.9</div>
    </div>
  )
}

/* ---------- Status bar ---------- */

interface Cell {
  label: string
  className: string
  art?: ReactNode
  on?: boolean
  menu?: boolean
}

const statusGroups: Cell[][] = [
  [
    { label: '栅格', className: 'w-[72px]', art: <path d="M12 0V47M24 0V47M36 0V47M0 11H47M0 23H47M0 35H47" strokeWidth={2} /> },
    { label: '捕捉', className: 'w-[72px]', art: <path d="M6 9H42M6 23H42M6 37H42" strokeWidth={6} strokeDasharray="7 7" /> },
    { label: '捕捉设置', className: 'w-12', menu: true },
  ],
  [
    { label: '推断约束', className: 'w-[76px]', art: <><rect x={24} y={1} width={22} height={16} /><rect x={0} y={30} width={24} height={18} fill={GREY} stroke="none" /><path d="M24 17V30" /></> },
    { label: '动态输入', className: 'w-[74px]', on: true, art: <><path d="M12 6V28M1 17H23" stroke="#fff" /><rect x={20} y={31} width={27} height={11} fill="#fff" stroke="#fff" /><path d="M23 33V40" stroke="#5c8ebf" /></> },
    { label: '正交', className: 'w-[74px]', on: true, art: <path d="M2 0V46H47M2 33H15V46" stroke="#fff" /> },
    { label: '极轴', className: 'w-[72px]', art: <><circle cx={20} cy={24} r={18} /><path d="M38 4L20 24H47" /></> },
    { label: '极轴设置', className: 'w-12', menu: true },
    { label: '等轴测草图', className: 'w-[72px]', art: <><path d="M8 4L42 40" stroke={RED} /><path d="M25 0V44" stroke={GREEN} /><rect x={21} y={19} width={7} height={7} /></> },
    { label: '等轴测设置', className: 'w-[50px]', menu: true },
    { label: '对象捕捉追踪', className: 'w-[72px]', on: true, art: <><path d="M37 6L3 41H47" stroke="#fff" /><rect x={14} y={20} width={8} height={8} fill="#fff" stroke="none" /></> },
    { label: '对象捕捉', className: 'w-[72px]', on: true, art: <><path d="M18 7H47V47H7V18" stroke="#fff" strokeWidth={2} /><rect x={1} y={1} width={12} height={12} stroke="#fff" /></> },
    { label: '对象捕捉设置', className: 'w-[52px]', menu: true },
    { label: '线宽', className: 'w-[76px]', art: <><path d="M26 7H48M26 20H48M26 33H48" /><path d="M1 8H26" strokeWidth={5} /><path d="M1 22H26" strokeWidth={8} /><path d="M1 37H26" strokeWidth={10} /></> },
    { label: '透明度', className: 'w-[74px]', on: true, art: <><rect x={1} y={1} width={46} height={46} stroke="#fff" /><path d="M5 10H43M5 30H43" stroke="#fff" strokeWidth={10} strokeDasharray="10 10" /><path d="M15 20H43M15 40H43" stroke="#fff" strokeWidth={10} strokeDasharray="10 10" /></> },
    { label: '选择循环', className: 'w-[76px]', art: <><path d="M7 0V14M0 7H14M13 38V13H40" /><rect x={18} y={18} width={30} height={30} fill="#7dd79c" stroke="none" /></> },
    { label: '三维对象捕捉', className: 'w-[74px]', art: <><path d="M8 34V12H38V41H16M8 12L18 1H47V28L38 41M38 12L47 1" /><rect x={2} y={34} width={12} height={13} stroke={ORANGE} /></> },
    { label: '三维对象捕捉设置', className: 'w-[50px]', menu: true },
  ],
  [
    { label: '动态 UCS', className: 'w-[72px]', art: <><path d="M6 6V42H40" /><path d="M6 0L0 12H12ZM47 42L36 36V48Z" fill={GREY} stroke="none" /><Bolt x={16} y={8} s={0.5} color={GREY} /></> },
    { label: '选择过滤', className: 'w-[72px]', art: <><path d="M14 10H36M14 42H36M5 16V36M41 16V36M12 6L18 1H47V34L42 40" /><g fill="#6fbdf5" stroke="none"><rect x={0} y={5} width={11} height={11} /><rect x={31} y={5} width={11} height={11} /><rect x={0} y={37} width={11} height={11} /><rect x={31} y={37} width={11} height={11} /></g></> },
    { label: '过滤设置', className: 'w-[48px]', menu: true },
    { label: '小控件', className: 'w-[72px]', on: true, art: <g stroke="#fff"><rect x={20} y={1} width={8} height={8} /><rect x={20} y={21} width={8} height={8} /><rect x={1} y={33} width={8} height={8} /><rect x={39} y={33} width={8} height={8} /><path d="M24 9V21M20 29L9 35M28 29L39 35M19 7Q5 14 5 32M29 7Q43 14 43 32M9 40L24 47L39 40" /></g> },
    { label: '小控件设置', className: 'w-12', menu: true },
  ],
  [
    { label: '注释可见性', className: 'w-[72px]', on: true, art: <><path d="M21 0L27 25L26 33L42 48L21 37L0 48L16 33L15 25Z" fill="#fff" stroke="none" /><circle cx={39} cy={11} r={8} stroke="#dce9f5" /></> },
    { label: '自动缩放', className: 'w-[72px]', art: <><path d="M21 0L27 25L26 33L42 48L21 37L0 48L16 33L15 25Z" fill="#dcdddf" stroke="none" /><Bolt x={28} y={0} s={0.42} color="#dcdddf" /></> },
    { label: '注释比例图标', className: 'w-[72px]', art: <path d="M24 0L30 25L29 33L45 48L24 37L3 48L19 33L18 25Z" fill="#dcdddf" stroke="none" /> },
  ],
]

function StatusCell({ cell }: { cell: Cell }) {
  return (
    <button aria-label={cell.label} aria-pressed={cell.on} className={`flex shrink-0 p-[2px] ${cell.className}`}>
      <span className={`flex flex-1 items-center justify-center ${cell.on ? 'bg-[#5c8ebf]' : ''}`}>
        {cell.menu ? <Caret /> : <Icon>{cell.art}</Icon>}
      </span>
    </button>
  )
}

function StatusBar() {
  return (
    <div className="flex h-[73px] shrink-0 gap-3 pl-[352px] text-[36px] text-[#eceef0]">
      <button className="w-[92px] shrink-0 bg-[#3b4453] font-bold">模型</button>
      {statusGroups.map((group, i) => (
        <div key={i} className="flex bg-[#3b4453]">
          {group.map((c) => (
            <StatusCell key={c.label} cell={c} />
          ))}
          {i === 3 && (
            <button className="flex items-center gap-[10px] pr-3 pl-[14px] text-[32px] whitespace-nowrap">
              1:1 / 100%
              <Caret />
            </button>
          )}
        </div>
      ))}
      <div className="flex gap-1">
        <button aria-label="切换工作空间" className="flex w-[120px] items-center gap-6 bg-[#3b4453] pl-3">
          <Icon>
            <circle cx={24} cy={24} r={12} stroke="#dcdddf" strokeWidth={10} />
            <path d="M24 0V8M24 40V48M0 24H8M40 24H48M7 7L13 13M35 35L41 41M41 7L35 13M13 35L7 41" stroke="#dcdddf" strokeWidth={8} />
          </Icon>
          <Caret />
        </button>
        <button aria-label="注释监视器" className="flex w-[72px] items-center justify-center bg-[#3b4453]">
          <Icon><path d="M24 0V47M0 24H47" stroke="#e4e5e7" strokeWidth={6} /></Icon>
        </button>
      </div>
      <div className="flex gap-1">
        <div className="relative flex w-[292px] items-center bg-[#3b4453]">
          <span className="pl-[22px]">
            <Icon w={28} h={48}>
              <path d="M0 2H26V46H0Z" fill="#dcdddf" stroke="none" />
              <path d="M14 7H26M18 14H26M14 21H26M18 28H26M14 35H26M18 41H26" stroke="#3b4453" />
            </Icon>
          </span>
          <select aria-label="当前图形单位" className="h-full flex-1 appearance-none pl-[38px]">
            <option>小数</option>
          </select>
          <span className="pointer-events-none absolute right-3"><Caret /></span>
        </div>
        <button aria-label="快捷特性" className="flex w-[72px] items-center justify-center bg-[#3b4453]">
          <Icon w={38}>
            <rect x={1} y={1} width={36} height={46} />
            <rect x={0} y={0} width={38} height={8} fill="#dcdddf" stroke="none" />
            <path d="M7 16H12M16 16H32M7 27H12M16 27H32M7 39H12M16 39H32" strokeWidth={3} />
          </Icon>
        </button>
      </div>
      <button aria-label="锁定用户界面" className="flex flex-1 items-center bg-[#3b4453] pl-3">
        <Icon>
          <rect x={1} y={1} width={46} height={36} />
          <path d="M1 5H47" strokeWidth={8} />
        </Icon>
      </button>
    </div>
  )
}

/* ---------- Desktop ---------- */

function SogouLogo({ size }: { size: number }) {
  return (
    <svg width={size} height={size} viewBox="0 0 94 94" className="block shrink-0" aria-hidden="true">
      <defs>
        <linearGradient id="sogou" x1="0" y1="0" x2="0" y2="1">
          <stop offset="0" stopColor="#f07840" />
          <stop offset="1" stopColor="#e8480c" />
        </linearGradient>
      </defs>
      <g transform="rotate(-14 47 47)">
        <rect x={9} y={9} width={76} height={76} rx={9} fill="url(#sogou)" />
      </g>
      <path d="M70 24C40 20 20 30 22 42C24 54 66 44 68 57C69 66 46 70 27 66" fill="none" stroke="#fff" strokeWidth={13} />
    </svg>
  )
}

function InputMethodBar() {
  return (
    <div className="absolute right-0 bottom-[122px] flex h-[90px] w-[384px] items-center overflow-hidden rounded-l-lg bg-[#fbfbfc] pl-4">
      <SogouLogo size={94} />
      <div className="ml-4 h-[82px] w-[11px] border-x-2 border-[#f4cfc8]" />
      <button className="ml-[26px] text-[44px] leading-none font-bold text-[#1568b4]">英</button>
      <button aria-label="中英文标点" className="ml-[30px]">
        <Icon w={32} h={40}>
          <circle cx={8} cy={9} r={6} fill="#1a72bc" stroke="none" />
          <path d="M20 20a6 6 0 1 1 9 5Q28 33 19 36Q23 32 23 28Z" fill="#1a72bc" stroke="none" />
        </Icon>
      </button>
      <button aria-label="表情" className="ml-[34px]">
        <Icon w={52} h={52}>
          <circle cx={26} cy={26} r={23} stroke="#1a72bc" strokeWidth={5} />
          <path d="M19 17V27M33 17V27" stroke="#1a72bc" strokeWidth={6} />
          <path d="M16 34Q26 43 36 34" stroke="#1a72bc" strokeWidth={4} />
        </Icon>
      </button>
      <button aria-label="手写" className="ml-6">
        <Icon w={30} h={40}><path d="M0 40V24L20 4L30 14V40Z" fill="#1a72bc" stroke="none" /></Icon>
      </button>
    </div>
  )
}

function Taskbar() {
  return (
    <footer className="flex h-[120px] shrink-0 items-center border-t border-[#b9b6b2] bg-[linear-gradient(90deg,#e8dfd6_0%,#e9ddd7_25%,#ebddd4_38%,#e6dfda_48%,#dadedb_54%,#d3e2e8_57%,#e0e3ee_61%,#e0dfe2_67%,#e3e2e8_77%,#e0e1e6_84%,#d9e4ee_88%,#dbe4ee_91%,#e0e1e4_95%,#e0e1e4_100%)] text-black">
      <button aria-label="搜索">
        <Icon w={50} h={50}>
          <circle cx={31} cy={17} r={17} stroke="#1a1a1a" strokeWidth={3} />
          <path d="M19 29L0 48" stroke="#1a1a1a" strokeWidth={3} />
        </Icon>
      </button>
      <button aria-label="任务视图" className="ml-[93px]">
        <Icon w={48} h={48}>
          <path d="M2 1V8H31V1M2 47V41H31V47M2 14H31V34H2ZM46 1V10M46 24V47" stroke="#1a1a1a" />
          <rect x={42} y={13} width={7} height={8} fill="#111" stroke="none" />
        </Icon>
      </button>
      <button aria-label="AutoCAD" className="ml-[70px] flex h-full w-[124px] flex-col items-center border-b-8 border-[#3a9dc2] pt-[23px]">
        <span className="flex size-[72px] items-center justify-center bg-[#f8e8e1] font-['Liberation_Sans',sans-serif] text-[72px] leading-none font-bold text-[#bb2026]">A</span>
      </button>
      <div className="flex-1" />
      <button aria-label="显示隐藏的图标">
        <Icon w={38} h={24}><path d="M1 22L19 3L37 22" stroke="#222" strokeWidth={3} /></Icon>
      </button>
      <button aria-label="电池" className="ml-[27px]">
        <Icon>
          <rect x={12} y={14} width={34} height={22} fill="#111" stroke="#111" />
          <path d="M48 21V30" stroke="#111" />
          <path d="M3 3V10M11 3V10M1 10H14V16Q14 21 7 21Q1 21 1 16ZM7 21V34H14" fill="#e2e3e8" stroke="#111" />
        </Icon>
      </button>
      <button aria-label="网络" className="ml-[30px]">
        <Icon w={42} h={42}>
          <path d="M2 40Q4 6 40 5M12 40Q12 16 40 15M22 40Q23 26 40 25" stroke="#222" />
          <circle cx={37} cy={38} r={4} fill="#111" stroke="none" />
        </Icon>
      </button>
      <button aria-label="音量" className="ml-[26px]">
        <Icon w={46} h={40}>
          <path d="M2 13H9L18 4V36L9 27H2Z" stroke="#111" />
          <path d="M26 15Q29 20 26 25" stroke="#222" />
          <path d="M31 10Q37 20 31 30M36 5Q46 20 36 35" stroke="#999" />
        </Icon>
      </button>
      <button className="ml-6 text-[40px] leading-none font-bold text-white [text-shadow:2px_0_#222,-2px_0_#222,0_2px_#222,0_-2px_#222]">英</button>
      <button aria-label="搜狗输入法" className="ml-11"><SogouLogo size={50} /></button>
      <div className="relative ml-[39px] flex w-[206px] flex-col items-center text-[40px] leading-[47px] whitespace-nowrap text-[#1b1b1b]">
        <span className="text-[38px]">11:09 周一</span>
        <span>2021/12/13</span>
        <span className="absolute -top-2 -right-3 size-3 rounded-full bg-[#dc1414]" />
      </div>
      <button aria-label="通知" className="mr-[6px] ml-12">
        <Icon>
          <path d="M7 1H47V47H3Q1 47 1 44V7H7V44Q7 47 3 47" stroke="#111" strokeWidth={3} />
          <path d="M15 13H39M15 22H39M15 31H27" stroke="#111" strokeWidth={3} />
        </Icon>
      </button>
    </footer>
  )
}

export default function App() {
  return (
    <div className="relative flex min-h-screen flex-col overflow-hidden bg-[#212832] font-['Noto_Sans','Noto_Sans_CJK_SC',sans-serif]">
      <TitleBar />
      <MenuBar />
      <RibbonTabs />
      <Ribbon />
      <DocumentTabs />
      <div className="flex flex-1 bg-[#3b4452] pb-1">
        <AuthoringPalette />
        <PropertiesPalette />
        <Viewport />
      </div>
      <LayoutTabs />
      <StatusBar />
      <Taskbar />
      <InputMethodBar />
    </div>
  )
}
